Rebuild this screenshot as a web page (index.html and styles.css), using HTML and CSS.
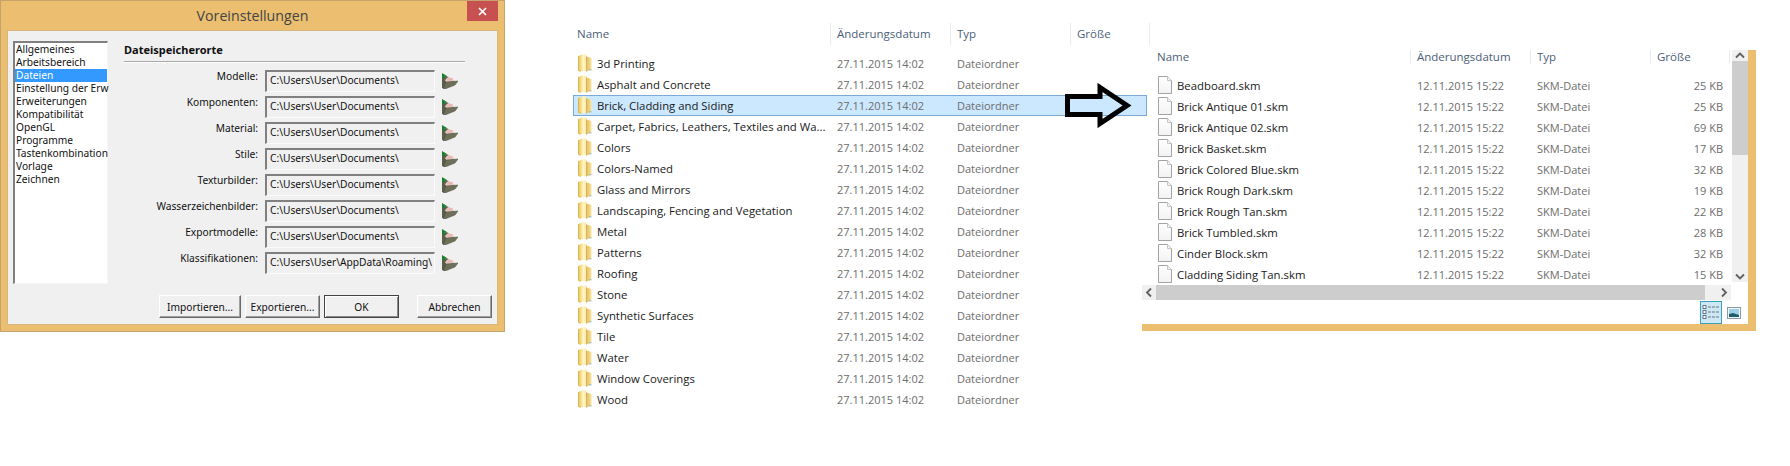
FILE: index.html
```html
<!DOCTYPE html>
<html lang="de">
<head>
<meta charset="utf-8">
<title>Voreinstellungen</title>
<link rel="stylesheet" href="styles.css">
</head>
<body>
<svg class="defs" width="0" height="0" aria-hidden="true">
  <defs>
    <linearGradient id="fy" x1="0" y1="0" x2="1" y2="0">
      <stop offset="0" stop-color="#e9c565"/>
      <stop offset="0.35" stop-color="#f8e08c"/>
      <stop offset="0.6" stop-color="#fff5c8"/>
      <stop offset="1" stop-color="#fbe9a4"/>
    </linearGradient>
    <linearGradient id="fr" x1="0" y1="0" x2="1" y2="0">
      <stop offset="0" stop-color="#e3bd5e"/>
      <stop offset="1" stop-color="#f8e49c"/>
    </linearGradient>
    <linearGradient id="pg" x1="0" y1="0" x2="0" y2="1">
      <stop offset="0" stop-color="#ffffff"/>
      <stop offset="1" stop-color="#f2f2f2"/>
    </linearGradient>
    <symbol id="folder" viewBox="0 0 14 18">
      <path d="M.5 2 L4 .5 H8.5 V17 H1.5 Q.5 17 .5 16 Z" fill="url(#fy)"/>
      <path d="M.5 2 V16 Q.5 17 1.5 17 H3" fill="none" stroke="#dcb551" stroke-width="1"/>
      <path d="M8.5 2.5 L13.5 4 V15.5 L8.5 17.5 Z" fill="url(#fr)"/>
      <path d="M8.5 2.5 V17.5" stroke="#d2a94c" stroke-width=".8"/>
      <path d="M11 15.8 H13.5" stroke="#8fb4cc" stroke-width="1"/>
    </symbol>
    <symbol id="file" viewBox="0 0 14 18">
      <path d="M.5 .5 H9.5 L13.5 4.5 V17.5 H.5 Z" fill="url(#pg)" stroke="#a3a3a3"/>
      <path d="M9.5 .5 V4.5 H13.5" fill="#f4f4f4" stroke="#c4c4c4"/>
    </symbol>
    <symbol id="browse" viewBox="0 0 17 16">
      <path d="M1 4 L5 3 L9 4.5 L9 7 L13 7 L13 9 L3 15 L1 15 Z" fill="#5d5f4d"/>
      <path d="M4.5 7 Q8 2.5 12.5 5.5 L12.5 8 L6 9 Z" fill="#eab7b3" stroke="#f7f1e8" stroke-width=".8"/>
      <path d="M2 16 L5 9 L17 8 L14 12 L4 16 Z" fill="#6f7059" stroke="#4b4c3c" stroke-width=".5"/>
      <path d="M1 0 L6 3 L3.5 3.6 L3.5 5.5 L1 5.5 Z" fill="#1a7f2c"/>
    </symbol>
  </defs>
</svg>

<section class="dialog">
  <header class="titlebar">
    <h1 class="title">Voreinstellungen</h1>
    <button class="close" type="button" aria-label="Schließen">
      <svg class="close-x" viewBox="0 0 9 9"><path d="M1 1 L8 8 M8 1 L1 8"/></svg>
    </button>
  </header>
  <div class="panel">
    <ul class="list">
      <li>Allgemeines</li>
      <li>Arbeitsbereich</li>
      <li class="sel">Dateien</li>
      <li>Einstellung der Erw</li>
      <li>Erweiterungen</li>
      <li>Kompatibilität</li>
      <li>OpenGL</li>
      <li>Programme</li>
      <li>Tastenkombination</li>
      <li>Vorlage</li>
      <li>Zeichnen</li>
    </ul>
    <div class="main">
      <h2 class="heading">Dateispeicherorte</h2>
      <div class="form">
        <div class="frow"><label class="flabel">Modelle:</label><div class="path">C:\Users\User\Documents\</div><svg class="browse"><use href="#browse"/></svg></div>
        <div class="frow"><label class="flabel">Komponenten:</label><div class="path">C:\Users\User\Documents\</div><svg class="browse"><use href="#browse"/></svg></div>
        <div class="frow"><label class="flabel">Material:</label><div class="path">C:\Users\User\Documents\</div><svg class="browse"><use href="#browse"/></svg></div>
        <div class="frow"><label class="flabel">Stile:</label><div class="path">C:\Users\User\Documents\</div><svg class="browse"><use href="#browse"/></svg></div>
        <div class="frow"><label class="flabel">Texturbilder:</label><div class="path">C:\Users\User\Documents\</div><svg class="browse"><use href="#browse"/></svg></div>
        <div class="frow"><label class="flabel">Wasserzeichenbilder:</label><div class="path">C:\Users\User\Documents\</div><svg class="browse"><use href="#browse"/></svg></div>
        <div class="frow"><label class="flabel">Exportmodelle:</label><div class="path">C:\Users\User\Documents\</div><svg class="browse"><use href="#browse"/></svg></div>
        <div class="frow"><label class="flabel">Klassifikationen:</label><div class="path">C:\Users\User\AppData\Roaming\</div><svg class="browse"><use href="#browse"/></svg></div>
      </div>
    </div>
    <footer class="actions">
      <button class="btn btn-import" type="button">Importieren...</button>
      <button class="btn btn-export" type="button">Exportieren...</button>
      <button class="btn btn-ok" type="button">OK</button>
      <button class="btn btn-cancel" type="button">Abbrechen</button>
    </footer>
  </div>
</section>

<section class="explorer explorer-a">
  <div class="thead">
    <div class="th th-name">Name</div><div class="th">Änderungsdatum</div><div class="th">Typ</div><div class="th th-last">Größe</div>
  </div>
  <div class="rows">
    <div class="row"><svg class="ico"><use href="#folder"/></svg><span class="name">3d Printing</span><span class="meta">27.11.2015 14:02</span><span class="meta">Dateiordner</span></div>
    <div class="row"><svg class="ico"><use href="#folder"/></svg><span class="name">Asphalt and Concrete</span><span class="meta">27.11.2015 14:02</span><span class="meta">Dateiordner</span></div>
    <div class="row row-sel"><svg class="ico"><use href="#folder"/></svg><span class="name">Brick, Cladding and Siding</span><span class="meta">27.11.2015 14:02</span><span class="meta">Dateiordner</span></div>
    <div class="row"><svg class="ico"><use href="#folder"/></svg><span class="name">Carpet, Fabrics, Leathers, Textiles and Wa...</span><span class="meta">27.11.2015 14:02</span><span class="meta">Dateiordner</span></div>
    <div class="row"><svg class="ico"><use href="#folder"/></svg><span class="name">Colors</span><span class="meta">27.11.2015 14:02</span><span class="meta">Dateiordner</span></div>
    <div class="row"><svg class="ico"><use href="#folder"/></svg><span class="name">Colors-Named</span><span class="meta">27.11.2015 14:02</span><span class="meta">Dateiordner</span></div>
    <div class="row"><svg class="ico"><use href="#folder"/></svg><span class="name">Glass and Mirrors</span><span class="meta">27.11.2015 14:02</span><span class="meta">Dateiordner</span></div>
    <div class="row"><svg class="ico"><use href="#folder"/></svg><span class="name">Landscaping, Fencing and Vegetation</span><span class="meta">27.11.2015 14:02</span><span class="meta">Dateiordner</span></div>
    <div class="row"><svg class="ico"><use href="#folder"/></svg><span class="name">Metal</span><span class="meta">27.11.2015 14:02</span><span class="meta">Dateiordner</span></div>
    <div class="row"><svg class="ico"><use href="#folder"/></svg><span class="name">Patterns</span><span class="meta">27.11.2015 14:02</span><span class="meta">Dateiordner</span></div>
    <div class="row"><svg class="ico"><use href="#folder"/></svg><span class="name">Roofing</span><span class="meta">27.11.2015 14:02</span><span class="meta">Dateiordner</span></div>
    <div class="row"><svg class="ico"><use href="#folder"/></svg><span class="name">Stone</span><span class="meta">27.11.2015 14:02</span><span class="meta">Dateiordner</span></div>
    <div class="row"><svg class="ico"><use href="#folder"/></svg><span class="name">Synthetic Surfaces</span><span class="meta">27.11.2015 14:02</span><span class="meta">Dateiordner</span></div>
    <div class="row"><svg class="ico"><use href="#folder"/></svg><span class="name">Tile</span><span class="meta">27.11.2015 14:02</span><span class="meta">Dateiordner</span></div>
    <div class="row"><svg class="ico"><use href="#folder"/></svg><span class="name">Water</span><span class="meta">27.11.2015 14:02</span><span class="meta">Dateiordner</span></div>
    <div class="row"><svg class="ico"><use href="#folder"/></svg><span class="name">Window Coverings</span><span class="meta">27.11.2015 14:02</span><span class="meta">Dateiordner</span></div>
    <div class="row"><svg class="ico"><use href="#folder"/></svg><span class="name">Wood</span><span class="meta">27.11.2015 14:02</span><span class="meta">Dateiordner</span></div>
  </div>
</section>

<section class="explorer-b">
  <div class="b-top">
    <div class="b-content">
      <div class="thead thead-b">
        <div class="th th-name">Name</div><div class="th">Änderungsdatum</div><div class="th">Typ</div><div class="th th-last">Größe</div>
      </div>
      <div class="rows rows-b">
        <div class="row"><svg class="ico"><use href="#file"/></svg><span class="name">Beadboard.skm</span><span class="meta">12.11.2015 15:22</span><span class="meta">SKM-Datei</span><span class="meta size">25 KB</span></div>
        <div class="row"><svg class="ico"><use href="#file"/></svg><span class="name">Brick Antique 01.skm</span><span class="meta">12.11.2015 15:22</span><span class="meta">SKM-Datei</span><span class="meta size">25 KB</span></div>
        <div class="row"><svg class="ico"><use href="#file"/></svg><span class="name">Brick Antique 02.skm</span><span class="meta">12.11.2015 15:22</span><span class="meta">SKM-Datei</span><span class="meta size">69 KB</span></div>
        <div class="row"><svg class="ico"><use href="#file"/></svg><span class="name">Brick Basket.skm</span><span class="meta">12.11.2015 15:22</span><span class="meta">SKM-Datei</span><span class="meta size">17 KB</span></div>
        <div class="row"><svg class="ico"><use href="#file"/></svg><span class="name">Brick Colored Blue.skm</span><span class="meta">12.11.2015 15:22</span><span class="meta">SKM-Datei</span><span class="meta size">32 KB</span></div>
        <div class="row"><svg class="ico"><use href="#file"/></svg><span class="name">Brick Rough Dark.skm</span><span class="meta">12.11.2015 15:22</span><span class="meta">SKM-Datei</span><span class="meta size">19 KB</span></div>
        <div class="row"><svg class="ico"><use href="#file"/></svg><span class="name">Brick Rough Tan.skm</span><span class="meta">12.11.2015 15:22</span><span class="meta">SKM-Datei</span><span class="meta size">22 KB</span></div>
        <div class="row"><svg class="ico"><use href="#file"/></svg><span class="name">Brick Tumbled.skm</span><span class="meta">12.11.2015 15:22</span><span class="meta">SKM-Datei</span><span class="meta size">28 KB</span></div>
        <div class="row"><svg class="ico"><use href="#file"/></svg><span class="name">Cinder Block.skm</span><span class="meta">12.11.2015 15:22</span><span class="meta">SKM-Datei</span><span class="meta size">32 KB</span></div>
        <div class="row"><svg class="ico"><use href="#file"/></svg><span class="name">Cladding Siding Tan.skm</span><span class="meta">12.11.2015 15:22</span><span class="meta">SKM-Datei</span><span class="meta size">15 KB</span></div>
      </div>
    </div>
    <div class="vscroll">
      <svg class="arrow-btn" viewBox="0 0 16 11"><path d="M4 7.5 L8 3.5 L12 7.5"/></svg>
      <div class="vthumb"></div>
      <div class="vtrack"></div>
      <svg class="arrow-btn arrow-down" viewBox="0 0 16 11"><path d="M4 3.5 L8 7.5 L12 3.5"/></svg>
    </div>
  </div>
  <div class="hscroll">
    <svg class="arrow-h" viewBox="0 0 14 15"><path d="M9 3.5 L5 7.5 L9 11.5"/></svg>
    <div class="hthumb"></div>
    <svg class="arrow-h" viewBox="0 0 14 15"><path d="M5 3.5 L9 7.5 L5 11.5"/></svg>
  </div>
  <div class="viewbar">
    <div class="view view-on">
      <svg class="view-ico" viewBox="0 0 18 17">
        <rect x="1" y="1.5" width="3" height="3" class="vbox"/>
        <rect x="1" y="6.5" width="3" height="3" class="vbox"/>
        <rect x="1" y="11.5" width="3" height="3" class="vbox"/>
        <path d="M6 3 H17 M6 8 H17 M6 13 H17" class="vline"/>
      </svg>
    </div>
    <svg class="view-thumb" viewBox="0 0 14 12">
      <rect x=".5" y=".5" width="13" height="11" fill="#f4f6f8" stroke="#8a9aa8"/>
      <rect x="2" y="2" width="10" height="8" fill="#9fd0ea"/>
      <path d="M2 10 V7 L6 6 L12 8 V10 Z" fill="#1f5c6e"/>
    </svg>
  </div>
</section>

<svg class="big-arrow" viewBox="0 0 68 45" aria-hidden="true">
  <path d="M2.5 13.5 H35 V4.5 L62 22.5 L35 40.5 V31.5 H2.5 Z"/>
</svg>
</body>
</html>
```
FILE: styles.css
```css
* { box-sizing: border-box; }
html, body { margin: 0; padding: 0; background: #fff; }
body { position: relative; width: 1790px; height: 466px; overflow: hidden; font-family: "Open Sans", "Noto Sans", sans-serif; }
.defs { position: absolute; }
ul, h1, h2 { margin: 0; padding: 0; font-weight: normal; }

/* dialog */
.dialog { position: absolute; left: 0; top: 0; width: 505px; height: 332px; background: #ebbe70; border: 1px solid #c4a36d; display: flex; flex-direction: column; }
.titlebar { position: relative; height: 29px; flex: none; display: flex; justify-content: center; align-items: center; }
.title { font-size: 14.2px; color: #444; font-family: "Open Sans", sans-serif; }
.close { position: absolute; right: 6px; top: 0; width: 31px; height: 20px; background: #c75050; border: 0; padding: 0; display: flex; align-items: center; justify-content: center; }
.close-x { width: 9px; height: 9px; }
.close-x path { stroke: #fff; stroke-width: 1.7; fill: none; }
.panel { flex: 1; margin: 0 6px 6px; background: #f0f0f0; border: 1px solid #d7b77f; padding: 10px 5px 0 5px; display: grid; grid-template-columns: 95px 1fr; grid-template-rows: 243px auto; row-gap: 11px; font-family: "Noto Sans", sans-serif; font-size: 10.2px; color: #111; }
.list { list-style: none; background: #fff; border-style: solid; border-color: #808080 #f7f7f7 #f7f7f7 #808080; border-width: 2px 1px 1px 2px; white-space: nowrap; }
.list li { height: 13px; line-height: 13px; padding-left: 1px; }
.list .sel { background: #3399ff; color: #fff; }
.main { padding-left: 16px; }
.heading { width: 341px; height: 21px; font-size: 11px; font-weight: 700; line-height: 18px; border-bottom: 1px solid #a8a8a8; box-shadow: 0 1px 0 #fff; color: #111; }
.form { margin-top: 8px; display: flex; flex-direction: column; gap: 4px; }
.frow { height: 22px; display: flex; align-items: flex-start; }
.flabel { width: 134px; text-align: right; line-height: 12px; }
.path { margin-left: 7px; width: 170px; height: 22px; border-style: solid; border-width: 2px 1px 1px 2px; border-color: #808080 #fbfbfb #fbfbfb #808080; line-height: 16px; padding-left: 3px; white-space: nowrap; }
.browse { width: 17px; height: 16px; margin: 3px 0 0 6px; }
.actions { grid-column: 1 / 3; display: flex; justify-content: flex-end; gap: 4px; }
.btn { height: 23px; font: inherit; color: #111; background: #f0f0f0; border: 1px solid; border-color: #fff #696969 #696969 #fff; box-shadow: inset -1px -1px 0 #a0a0a0; padding: 0; }
.btn-import { width: 82px; }
.btn-export { width: 75px; }
.btn-ok { width: 75px; border-color: #444; box-shadow: inset 1px 1px 0 #fff, inset -1px -1px 0 #8a8a8a; }
.btn-cancel { width: 75px; margin-left: 14px; }

/* explorer */
.explorer { position: absolute; left: 573px; top: 23px; width: 580px; z-index: 2; }
.thead { display: flex; height: 22px; margin-left: -3px; align-items: stretch; color: #4c607a; font-size: 11.5px; }
.th { width: 120px; padding-left: 6px; border-left: 1px solid #e8ebef; line-height: 22px; white-space: nowrap; }
.th-name { width: 260px; padding-left: 7px; border-left: 0; }
.th-last { width: 80px; border-right: 1px solid #e8ebef; }
.rows { margin-top: 8px; }
.row { display: grid; grid-template-columns: 19px 240px 120px 120px 66px; height: 21px; align-items: center; width: 574px; padding: 0 0 1px 4px; border: 1px solid transparent; font-size: 11.35px; white-space: nowrap; }
.row-sel { background: #cce8ff; border-color: #7da9d8; }
.ico { width: 14px; height: 18px; display: block; }
.name { color: #1a1a1a; }
.meta { color: #6d6d6d; font-size: 11px; }
.size { text-align: right; }

.explorer-b { position: absolute; left: 1142px; top: 50px; width: 614px; height: 281px; background: #fff; border-right: 8px solid #ebbe70; border-bottom: 7px solid #ebbe70; display: flex; flex-direction: column; z-index: 1; }
.b-top { display: flex; height: 235px; flex: none; }
.b-content { width: 590px; flex: none; overflow: hidden; }
.thead-b { height: 14px; margin-left: 8px; }
.thead-b .th { line-height: 14px; }
.rows-b { margin-top: 11px; }
.rows-b .row { width: 590px; border: 0; padding-left: 16px; }
.vscroll { width: 16px; height: 232px; background: #f0f0f0; display: flex; flex-direction: column; }
.arrow-btn { width: 16px; height: 11px; flex: none; }
.arrow-btn path, .arrow-h path { fill: none; stroke: #606060; stroke-width: 1.8; }
.vthumb { height: 94px; background: #cdcdcd; }
.vtrack { flex: 1; }
.hscroll { height: 15px; width: 589px; background: #f0f0f0; display: flex; flex: none; }
.arrow-h { width: 14px; height: 15px; flex: none; }
.hthumb { width: 549px; background: #cdcdcd; }
.hscroll .arrow-h:last-child { margin-left: 12px; }
.viewbar { flex: 1; display: flex; align-items: flex-end; padding-left: 558px; gap: 5px; }
.view { width: 22px; height: 23px; display: flex; align-items: center; justify-content: center; }
.view-on { background: #cce8f4; border: 1px solid #3c9fc0; }
.view-ico { width: 18px; height: 17px; }
.vbox { fill: #fff; stroke: #6b7683; stroke-width: 1; }
.vline { stroke: #6b7683; stroke-width: 1; stroke-dasharray: 3 1; }
.view-thumb { width: 14px; height: 12px; margin-bottom: 5px; }

.big-arrow { position: absolute; left: 1065px; top: 83px; width: 68px; height: 45px; z-index: 3; }
.big-arrow path { fill: none; stroke: #000; stroke-width: 5; stroke-linejoin: miter; }
```
